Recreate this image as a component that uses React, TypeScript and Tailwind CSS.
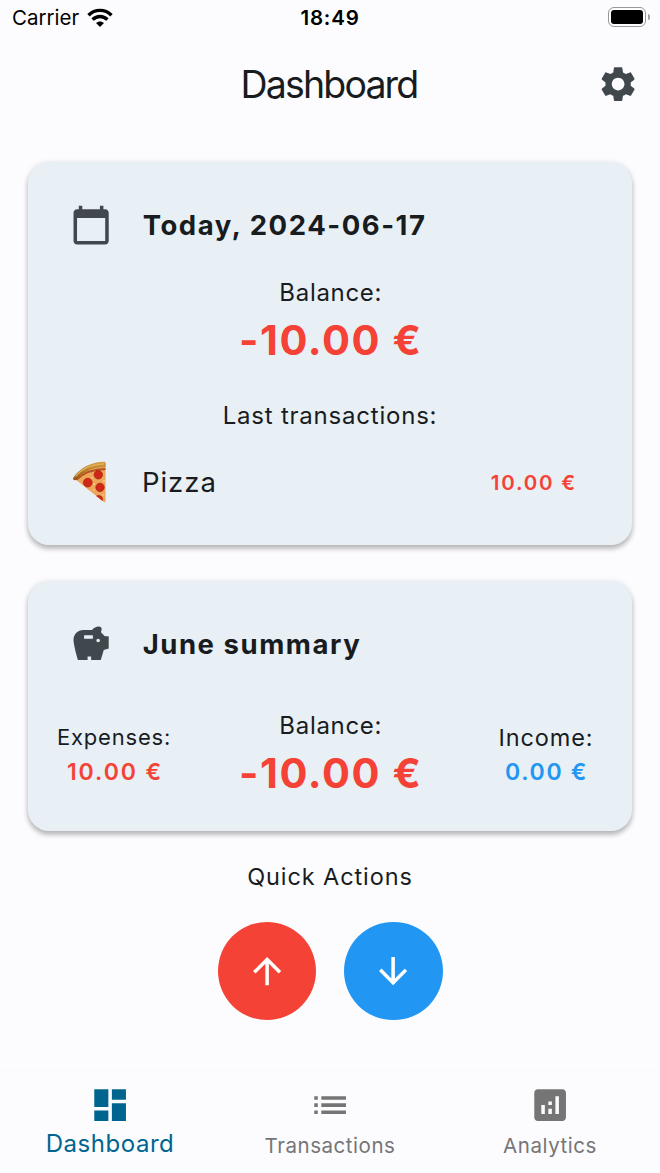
import type { ReactNode } from "react";

const ICONS = {
  settings:
    "M19.14 12.94c.04-.3.06-.61.06-.94 0-.32-.02-.64-.07-.94l2.03-1.58c.18-.14.23-.41.12-.61l-1.92-3.32c-.12-.22-.37-.29-.59-.22l-2.39.96c-.5-.38-1.03-.7-1.62-.94l-.36-2.54c-.04-.24-.24-.41-.48-.41h-3.84c-.24 0-.43.17-.47.41l-.36 2.54c-.59.24-1.13.57-1.62.94l-2.39-.96c-.22-.08-.47 0-.59.22L2.74 8.87c-.12.21-.08.47.12.61l2.03 1.58c-.05.3-.09.63-.09.94s.02.64.07.94l-2.03 1.58c-.18.14-.23.41-.12.61l1.92 3.32c.12.22.37.29.59.22l2.39-.96c.5.38 1.03.7 1.62.94l.36 2.54c.05.24.24.41.48.41h3.84c.24 0 .44-.17.47-.41l.36-2.54c.59-.24 1.13-.56 1.62-.94l2.39.96c.22.08.47 0 .59-.22l1.92-3.32c.12-.22.07-.47-.12-.61l-2.01-1.58zM12 15.6c-1.98 0-3.6-1.62-3.6-3.6s1.62-3.6 3.6-3.6 3.6 1.62 3.6 3.6-1.62 3.6-3.6 3.6z",
  calendar:
    "M20 3h-1V1h-2v2H7V1H5v2H4c-1.1 0-2 .9-2 2v16c0 1.1.9 2 2 2h16c1.1 0 2-.9 2-2V5c0-1.1-.9-2-2-2zm0 18H4V8h16v13z",
  savings:
    "M19.83 7.5l-2.27-2.27c.07-.42.18-.81.32-1.15.08-.18.12-.37.12-.58 0-.83-.67-1.5-1.5-1.5-1.64 0-3.09.79-4 2h-5C4.46 4 2 6.46 2 9.5S4.5 21 4.5 21H10v-2h2v2h5.5l1.68-5.59 2.82-.94V7.5h-2.17zM13 9H8V7h5v2zm3 2c-.55 0-1-.45-1-1s.45-1 1-1 1 .45 1 1-.45 1-1 1z",
  dashboard:
    "M3 13h8V3H3v10zm0 8h8v-6H3v6zm10 0h8V11h-8v10zm0-18v6h8V3h-8z",
  list: "M3 13h2v-2H3v2zm0 4h2v-2H3v2zm0-8h2V7H3v2zm4 4h14v-2H7v2zm0 4h14v-2H7v2zM7 7v2h14V7H7z",
  analytics:
    "M19 3H5c-1.1 0-2 .9-2 2v14c0 1.1.9 2 2 2h14c1.1 0 2-.9 2-2V5c0-1.1-.9-2-2-2zM9 17H7v-5h2v5zm4 0h-2v-3h2v3zm0-5h-2v-2h2v2zm4 5h-2V7h2v10z",
  up: "M4 12l1.41 1.41L11 7.83V20h2V7.83l5.58 5.59L20 12l-8-8-8 8z",
  down: "M20 12l-1.41-1.41L13 16.17V4h-2v12.17l-5.58-5.59L4 12l8 8 8-8z",
};

function Icon({ name, className = "" }: { name: keyof typeof ICONS; className?: string }) {
  return (
    <svg viewBox="0 0 24 24" fill="currentColor" className={`size-[42.24px] shrink-0 ${className}`}>
      <path d={ICONS[name]} />
    </svg>
  );
}

function Pizza() {
  return (
    <svg viewBox="0 0 42 42" className="size-[42px] shrink-0">
      <defs>
        <clipPath id="slice">
          <path d="M5 18C12 8 23 4 35.5 5v35c-.3 1.3-1 1.5-2 .8z" />
        </clipPath>
        <linearGradient id="crust" x1="0" y1="0" x2="0" y2="1">
          <stop offset="0" stopColor="#d9a044" />
          <stop offset="1" stopColor="#955415" />
        </linearGradient>
      </defs>
      <path d="M5 18C12 8 23 4 35.5 5v35c-.3 1.3-1 1.5-2 .8z" fill="#eda65a" />
      <g clipPath="url(#slice)">
        <path d="M6 19C13 12 24 8 36 8" fill="none" stroke="#b5521f" strokeWidth="2" />
        <g fill="#cf2817" stroke="#a92012" strokeWidth="0.7">
          <circle cx="28.3" cy="13.8" r="4.2" />
          <circle cx="17.8" cy="21.6" r="4.4" />
          <circle cx="30" cy="26.4" r="4.2" />
          <circle cx="28.5" cy="38.5" r="4" />
        </g>
        <g fill="#ffd287">
          <circle cx="22" cy="17" r="0.8" />
          <circle cx="24" cy="23" r="1" />
          <circle cx="34" cy="20" r="0.9" />
          <circle cx="24" cy="29" r="0.8" />
          <circle cx="33" cy="34" r="0.8" />
        </g>
      </g>
      <path
        d="M3.2 17C9 7.5 21 .7 34.5.8c1.2.1 1.5 1 1.3 3.6-.1 1.6-.7 1.9-2.1 1.8C23 6 13.5 10.5 6.5 18.6c-1.6 1.3-4.3.2-3.3-1.6z"
        fill="url(#crust)"
      />
      <path d="M5.5 15.3C12 7.8 22 3.2 34 2.9" fill="none" stroke="#e4b35a" strokeWidth="1.1" />
    </svg>
  );
}

function StatusBar() {
  return (
    <div className="flex h-[36px] items-center justify-between pr-[10px] pl-[12px] text-[20.5px] text-black">
      <div className="flex w-[200px] items-center gap-2">
        <span>Carrier</span>
        <svg viewBox="0 0 26 20" className="mb-px h-[20px] w-[26px]" fill="none" stroke="#000" strokeWidth="3.4">
          <path d="M1.5 7.2C8 .8 18 .8 24.5 7.2" />
          <path d="M5.6 11.6c4.2-4.2 10.6-4.2 14.8 0" />
          <path d="M13 19l-4-3.9c2.2-2.3 5.8-2.3 8 0z" fill="#000" stroke="none" />
        </svg>
      </div>
      <span className="mr-[2px] font-semibold tracking-[0.8px]">18:49</span>
      <div className="mb-[2px] flex w-[200px] items-center justify-end gap-[2px]">
        <div className="h-5 w-[38.5px] rounded-[6px] border-[1.5px] border-[#98989a] p-[2px]">
          <div className="h-full rounded-[3px] bg-black" />
        </div>
        <div className="h-[6px] w-[2px] rounded-r-full bg-[#a2a2a4]" />
      </div>
    </div>
  );
}

function Card({ className, children }: { className: string; children: ReactNode }) {
  return (
    <section
      className={`mx-7 rounded-[21px] bg-[#e8eff5] shadow-[0_4px_5px_rgba(0,0,0,0.22),0_1px_6px_rgba(0,0,0,0.12)] ${className}`}
    >
      {children}
    </section>
  );
}

function CardTitle({ icon, children }: { icon: keyof typeof ICONS; children: ReactNode }) {
  return (
    <div className="flex h-[42px] items-center gap-[30px] pl-[42.4px]">
      <Icon name={icon} className="text-[#41484d]" />
      <h2 className="mt-[2px] text-[27.5px] font-bold tracking-[1.55px]">{children}</h2>
    </div>
  );
}

function Balance() {
  return (
    <div className="flex flex-1 flex-col items-center pl-[1.5px]">
      <p className="h-[30px] text-[24px] leading-[30px] tracking-[0.7px]">Balance:</p>
      <p className="mt-[6px] h-[52px] text-[41.5px] leading-[52px] font-bold tracking-[1.6px] text-[#f44336]">
        -10.00 €
      </p>
    </div>
  );
}

function NavItem({ icon, label, active = false }: { icon: keyof typeof ICONS; label: string; active?: boolean }) {
  return (
    <button
      type="button"
      className={`flex flex-1 flex-col items-center pt-[11.5px] ${active ? "text-[#00658e]" : "text-[#757575]"}`}
    >
      <Icon name={icon} />
      <span
        className={
          active
            ? "mt-[3px] text-[24px] leading-[30px] tracking-[0.55px]"
            : "mt-[5px] text-[20.5px] leading-[30px] tracking-[0.55px]"
        }
      >
        {label}
      </span>
    </button>
  );
}

export default function App() {
  return (
    <div className="flex h-[1173px] w-[660px] flex-col overflow-hidden bg-[#fcfcff] font-['Inter',sans-serif] whitespace-nowrap text-[#191c1e]">
      <StatusBar />

      <header className="grid h-[98px] grid-cols-[1fr_auto_1fr] items-center">
        <h1 className="col-start-2 mr-[2px] text-[37.5px] tracking-[-1.85px]">Dashboard</h1>
        <button type="button" className="mr-[20.5px] mb-[2px] justify-self-end text-[#41484d]" aria-label="Settings">
          <Icon name="settings" />
        </button>
      </header>

      <Card className="mt-7 h-[383px] pt-[42px]">
        <CardTitle icon="calendar">Today, 2024-06-17</CardTitle>
        <div className="mt-[32px] flex">
          <Balance />
        </div>
        <p className="mt-[35px] text-center text-[24px] leading-[30px] tracking-[0.78px]">Last transactions:</p>
        <div className="mt-[30px] flex h-[42px] items-center pr-[55px] pl-[42.4px]">
          <Pizza />
          <span className="mt-[2px] ml-[29.5px] text-[27.5px] tracking-[1px]">Pizza</span>
          <span className="mt-[2px] ml-auto text-[20.5px] font-semibold tracking-[1.8px] text-[#f44336]">10.00 €</span>
        </div>
      </Card>

      <Card className="mt-[35.5px] h-[250px] pt-[42.5px]">
        <CardTitle icon="savings">June summary</CardTitle>
        <div className="mt-[46px] flex">
          <div className="flex w-[172px] flex-col items-center pt-[11px]">
            <p className="text-[22px] leading-[30px] tracking-[0.8px]">Expenses:</p>
            <p className="mt-[5px] pl-[2px] text-[23px] leading-[30px] font-semibold tracking-[1.9px] text-[#f44336]">
              10.00 €
            </p>
          </div>
          <Balance />
          <div className="flex w-[172px] flex-col items-center pt-[12px]">
            <p className="text-[23.5px] leading-[30px] tracking-[0.9px]">Income:</p>
            <p className="mt-[4px] pl-[1px] text-[23px] leading-[30px] font-semibold tracking-[1.7px] text-[#2196f3]">
              0.00 €
            </p>
          </div>
        </div>
      </Card>

      <p className="mt-[31px] text-center text-[23.5px] leading-[30px] tracking-[0.9px]">Quick Actions</p>
      <div className="mt-[30px] flex justify-center gap-7">
        <button type="button" aria-label="Add expense" className="grid size-[98.5px] place-items-center rounded-full bg-[#f44336] text-white">
          <Icon name="up" />
        </button>
        <button type="button" aria-label="Add income" className="grid size-[98.5px] place-items-center rounded-full bg-[#2196f3] text-white">
          <Icon name="down" />
        </button>
      </div>

      <nav className="mt-auto flex h-[101px] bg-[#fcfcff] shadow-[0_-1px_2px_rgba(0,0,0,0.015)]">
        <NavItem icon="dashboard" label="Dashboard" active />
        <NavItem icon="list" label="Transactions" />
        <NavItem icon="analytics" label="Analytics" />
      </nav>
    </div>
  );
}
